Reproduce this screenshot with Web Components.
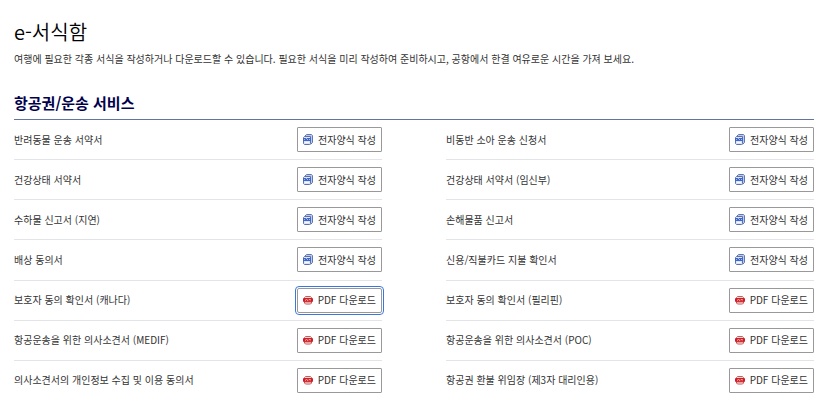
<!DOCTYPE html>
<html lang="ko">
<head>
<meta charset="utf-8">
<meta name="viewport" content="width=device-width, initial-scale=1">
<title>e-서식함</title>
<style>
    body {
        margin: 0;
        background: #fff;
        color: #333;
        font: 10px/16px "Noto Sans CJK KR", sans-serif;
    }
</style>
</head>
<body>
<forms-page>
    <span slot="title">e-서식함</span>
    <span slot="intro">여행에 필요한 각종 서식을 작성하거나 다운로드할 수 있습니다. 필요한 서식을 미리 작성하여 준비하시고, 공항에서 한결 여유로운 시간을 가져 보세요.</span>
    <form-section>
        <span slot="heading">항공권/운송 서비스</span>
        <form-item type="eform">반려동물 운송 서약서</form-item>
        <form-item type="eform">비동반 소아 운송 신청서</form-item>
        <form-item type="eform">건강상태 서약서</form-item>
        <form-item type="eform">건강상태 서약서 (임신부)</form-item>
        <form-item type="eform">수하물 신고서 (지연)</form-item>
        <form-item type="eform">손해물품 신고서</form-item>
        <form-item type="eform">배상 동의서</form-item>
        <form-item type="eform">신용/직불카드 지불 확인서</form-item>
        <form-item type="pdf" active>보호자 동의 확인서 (캐나다)</form-item>
        <form-item type="pdf">보호자 동의 확인서 (필리핀)</form-item>
        <form-item type="pdf">항공운송을 위한 의사소견서 (MEDIF)</form-item>
        <form-item type="pdf">항공운송을 위한 의사소견서 (POC)</form-item>
        <form-item type="pdf">의사소견서의 개인정보 수집 및 이용 동의서</form-item>
        <form-item type="pdf">항공권 환불 위임장 (제3자 대리인용)</form-item>
    </form-section>
</forms-page>

<script>
class FormsPage extends HTMLElement {
    constructor() {
        super();
        this.shadow = this.attachShadow({ mode: 'open' });
    }

    connectedCallback() {
        this.shadow.innerHTML = `
            <style>
                :host {
                    display: block;
                    padding: 16px 8px 0 14px;
                }

                h1 {
                    margin: 0;
                    color: #000;
                    font-size: 20px;
                    font-weight: 350;
                    line-height: 32px;
                }

                p {
                    margin: 3px 0 26px;
                }
            </style>

            <main>
                <h1><slot name="title"></slot></h1>
                <p><slot name="intro"></slot></p>
                <slot></slot>
            </main>
        `;
    }
}

class FormSection extends HTMLElement {
    constructor() {
        super();
        this.shadow = this.attachShadow({ mode: 'open' });
    }

    connectedCallback() {
        this.shadow.innerHTML = `
            <style>
                :host {
                    display: block;
                }

                h2 {
                    margin: 0;
                    padding-bottom: 6px;
                    border-bottom: 1px solid #6673a0;
                    color: #00004c;
                    font-size: 15px;
                    font-weight: 700;
                    line-height: 20px;
                }

                .list {
                    display: grid;
                    grid-template-columns: 1fr 1fr;
                    column-gap: 64px;
                    min-height: 281px;
                }

                /* the last row has no divider */
                ::slotted(form-item:nth-last-of-type(-n + 2)) {
                    --divider: transparent;
                }
            </style>

            <section>
                <h2><slot name="heading"></slot></h2>
                <div class="list" role="list"><slot></slot></div>
            </section>
        `;
    }
}

class FormItem extends HTMLElement {
    constructor() {
        super();
        this.shadow = this.attachShadow({ mode: 'open' });
    }

    get type() {
        return this.getAttribute('type');
    }

    connectedCallback() {
        this.setAttribute('role', 'listitem');
        this.shadow.innerHTML = `
            <style>
                :host {
                    display: flex;
                    align-items: center;
                    justify-content: space-between;
                    gap: 8px;
                    box-sizing: border-box;
                    min-height: 40px;
                    border-bottom: 1px solid var(--divider, #e3e4e8);
                }

                button {
                    display: flex;
                    align-items: center;
                    flex: none;
                    gap: 5px;
                    box-sizing: border-box;
                    height: 25px;
                    padding: 0 5px;
                    border: 1px solid #999;
                    border-radius: 1px;
                    background: #fff;
                    color: #333;
                    font: inherit;
                    cursor: pointer;
                }

                button:focus-visible,
                :host([active]) button {
                    border-radius: 2px;
                    outline: 1px solid #3c78dc;
                    outline-offset: 1px;
                }

                svg {
                    display: block;
                    width: 10px;
                    height: 12px;
                }
            </style>

            <span id="name"><slot></slot></span>
            <button type="button" id="action" aria-labelledby="name action">
                ${this.type === 'pdf' ? this.renderPdfIcon() : this.renderFormIcon()}
                ${this.type === 'pdf' ? 'PDF 다운로드' : '전자양식 작성'}
            </button>
        `;
    }

    renderFormIcon() {
        return `
            <svg viewBox="0 0 10 12" fill="none" aria-hidden="true">
                <path d="M1.5 2.5l2-2h5l1 1v7l-2 2" fill="#bccaea" stroke="#6276b0"/>
                <path d="M.5 3.5l1-1h6v7l-1 1h-5l-1-1z" fill="#dce4f6" stroke="#5c70ad"/>
                <path d="M0 4h8v3H0z" fill="#3d68c8"/>
                <path d="M1 5.5h1M3 4.5h1M4 5.5h1M6 5.5h1" stroke="#9db6ec"/>
                <path d="M2 8.5h4" stroke="#f4f7fd"/>
            </svg>
        `;
    }

    renderPdfIcon() {
        return `
            <svg viewBox="0 0 10 12" fill="none" aria-hidden="true">
                <path d="M1.5 4.5v-1l1-1h5l1 1v1" fill="#f6d5d5" stroke="#cf5a5a"/>
                <rect y="4" width="10" height="4" rx="1" fill="#cb2026"/>
                <path d="M2 6.5L3.5 5.5l1.5 1 1-1 2 .5" stroke="#f2b4b4"/>
                <path d="M1.5 8v1l1 1h5l1-1V8z" fill="#fff" stroke="#cf4a4a"/>
            </svg>
        `;
    }
}

customElements.define('forms-page', FormsPage);
customElements.define('form-section', FormSection);
customElements.define('form-item', FormItem);
</script>
</body>
</html>
